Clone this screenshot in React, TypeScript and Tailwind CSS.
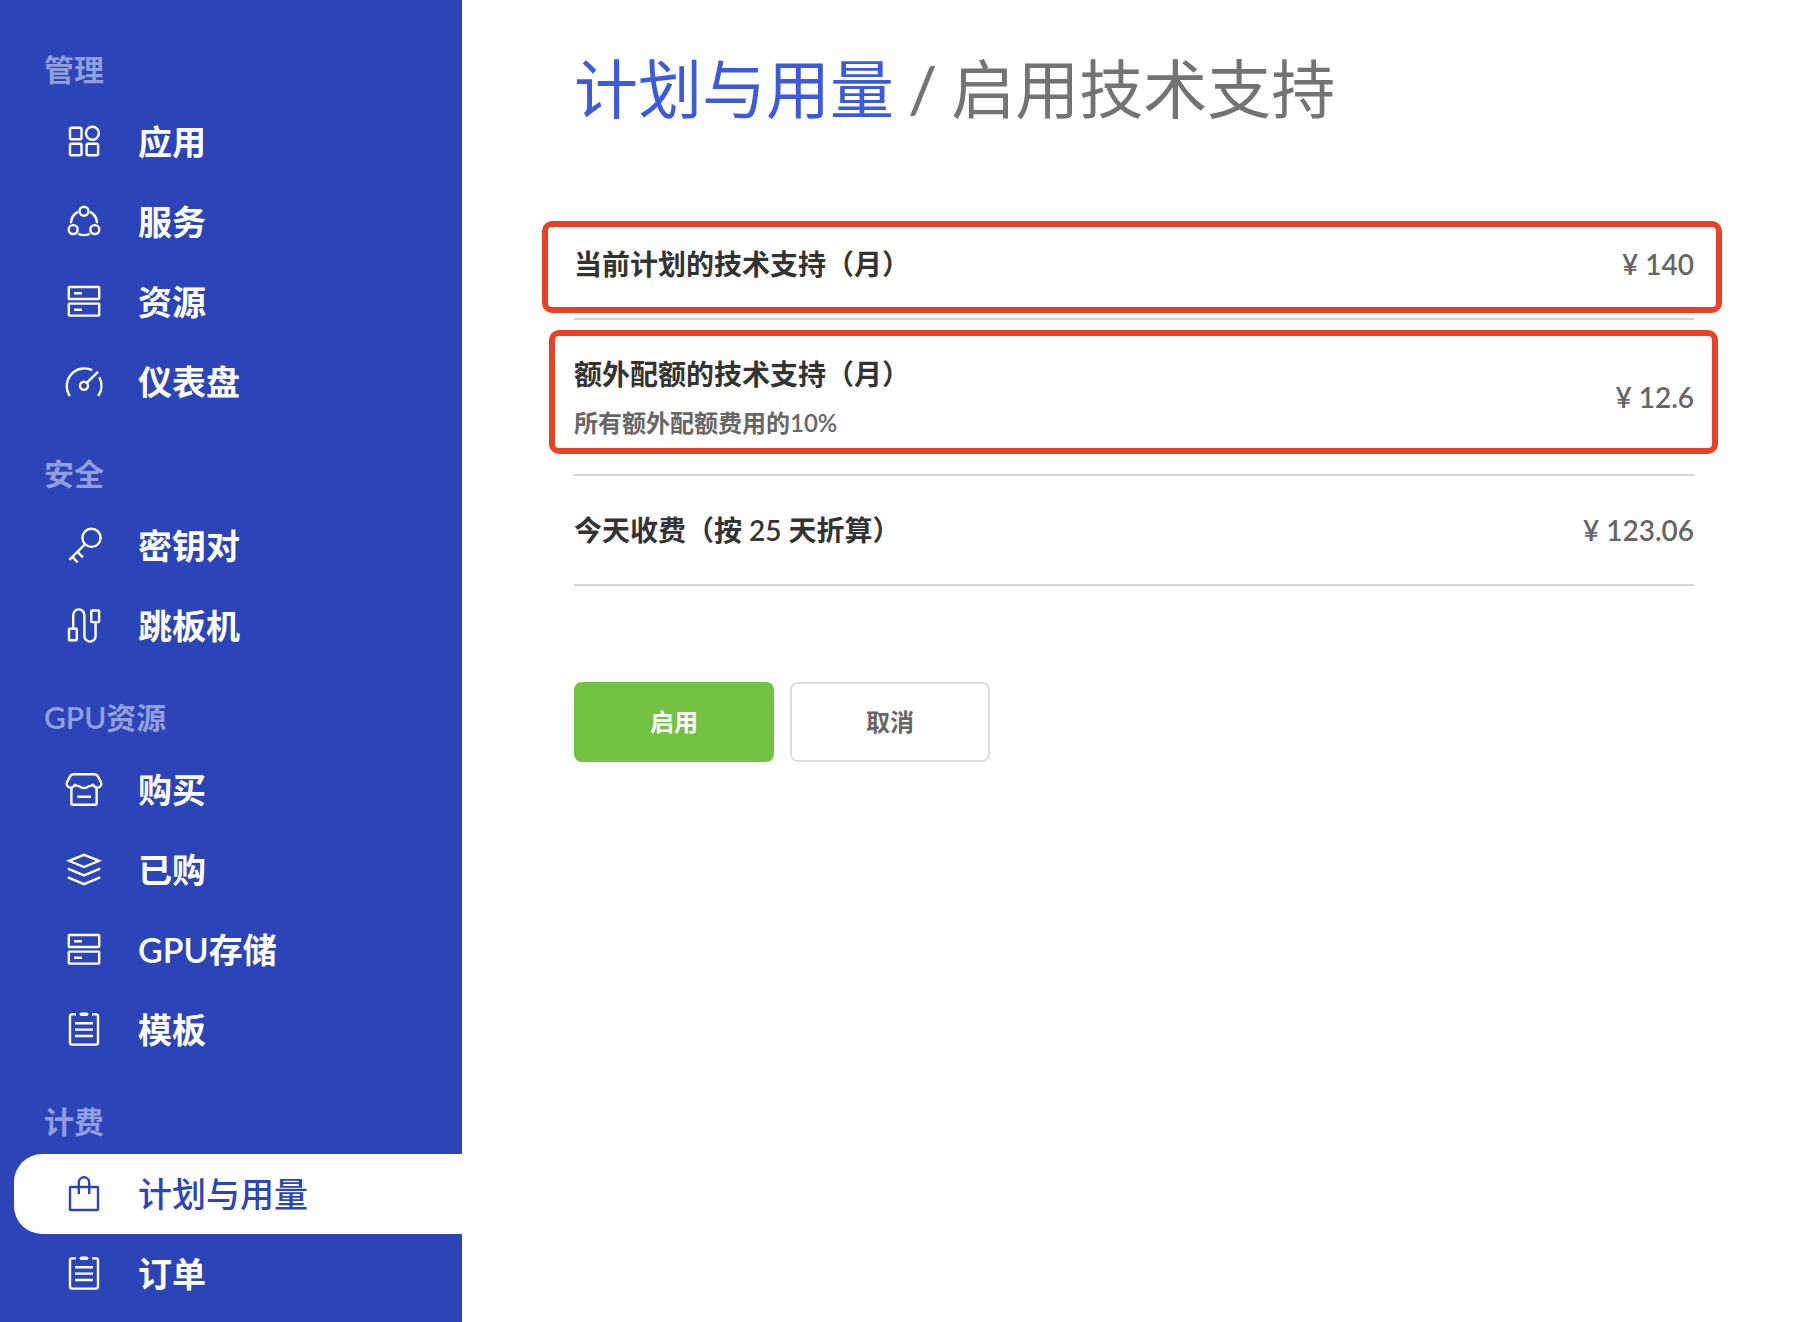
import type { ReactNode } from "react";

interface NavItem {
  label: string;
  icon: ReactNode;
  active?: boolean;
}

interface NavGroup {
  title: string;
  items: NavItem[];
}

interface Charge {
  label: string;
  note?: string;
  price: string;
  // position of the red highlight around the row
  highlight?: string;
}

const Icon = ({ children }: { children: ReactNode }) => (
  <svg
    viewBox="0 0 40 40"
    className="size-10 shrink-0"
    fill="none"
    stroke="currentColor"
    strokeWidth="2.4"
    aria-hidden="true"
  >
    {children}
  </svg>
);

const AppsIcon = () => (
  <Icon>
    <rect x="6" y="5.7" width="11.5" height="11.5" rx="1.5" />
    <circle cx="28.4" cy="11.3" r="6.5" />
    <rect x="6" y="21.7" width="11.5" height="11.5" rx="1.5" />
    <rect x="22.6" y="21.7" width="11.5" height="11.5" rx="1.5" />
  </Icon>
);

const ServicesIcon = () => (
  <Icon>
    <circle cx="20" cy="9.2" r="4.5" />
    <circle cx="9.2" cy="27.6" r="4.5" />
    <circle cx="30.8" cy="27.6" r="4.5" />
    <path d="M7 21.3A13.2 13.2 0 0 1 13.8 9.9M33 21.3A13.2 13.2 0 0 0 26.2 9.9M14.3 31.8A13.2 13.2 0 0 0 25.7 31.8" />
  </Icon>
);

const ServerIcon = () => (
  <Icon>
    <rect x="4.8" y="5" width="30.4" height="12" rx="0.5" />
    <rect x="4.8" y="21.6" width="30.4" height="12" rx="0.5" />
    <path d="M10 11.3h8M10 27.7h8" />
  </Icon>
);

const GaugeIcon = () => (
  <Icon>
    <circle cx="20" cy="23.7" r="4" />
    <path d="M23 20.6 34 9.8M5.8 34A17.7 17.7 0 0 1 28.2 8.2M35.3 15.3A17.7 17.7 0 0 1 34.2 34" />
  </Icon>
);

const KeyIcon = () => (
  <Icon>
    <circle cx="27.5" cy="11.8" r="9.1" />
    <path d="M20.9 18.3 5.3 33.9M13.3 25.7l5.6 5.6M8.2 30.8l5.5 5.5" />
  </Icon>
);

const CableIcon = () => (
  <Icon>
    <rect x="5" y="22.7" width="7.8" height="11.6" rx="0.5" />
    <rect x="27.3" y="4.5" width="7.8" height="11.6" rx="0.5" />
    <path d="M9.2 22.5V9a5.6 5.6 0 0 1 11.2 0v21a5.6 5.6 0 0 0 11.2 0V16.5" />
  </Icon>
);

const StoreIcon = () => (
  <Icon>
    <path
      strokeLinejoin="round"
      d="M9.5 4.3h21c1.7 0 2.7.7 3.4 2.1l3 5.6c1.4 2.9-.6 5.6-3.5 5.6-2 0-3.4-1.2-4.5-2.8-1.4 1.5-2.7 1.3-4 1.3-1.5 1.3-3 2-4.9 2s-3.4-.7-4.9-2c-1.3 0-2.6.2-4-1.3-1.1 1.6-2.5 2.8-4.5 2.8-2.9 0-4.9-2.7-3.5-5.6l3-5.6c.7-1.4 1.7-2.1 3.4-2.1Z"
    />
    <path d="M7.4 17.5v16.2q0 1 1 1h23.2q1 0 1-1V17.5M13.3 26.7H27" />
  </Icon>
);

const LayersIcon = () => (
  <Icon>
    <path d="M5 10.8 20 4.9l15 5.9-15 6.2Z" />
    <path d="M3.8 18.6 20 25.4l16.2-6.8M3.8 27.3 20 34.2l16.2-6.9" />
  </Icon>
);

const ClipboardIcon = () => (
  <Icon>
    <path d="M12 4.4H8q-2 0-2 2v26.2q0 2 2 2h24q2 0 2-2V6.4q0-2-2-2h-4" />
    <path d="M17.3 4.3h5.4" strokeWidth="3.4" strokeLinecap="round" />
    <path d="M11 13.3h18M11 19.6h18M11 26h18" />
  </Icon>
);

const BagIcon = () => (
  <Icon>
    <rect x="6" y="13" width="28" height="23" rx="0.5" />
    <path d="M14.8 20V8.5a5.2 5.2 0 0 1 10.4 0V20" />
  </Icon>
);

const groups: NavGroup[] = [
  {
    title: "管理",
    items: [
      { label: "应用", icon: <AppsIcon /> },
      { label: "服务", icon: <ServicesIcon /> },
      { label: "资源", icon: <ServerIcon /> },
      { label: "仪表盘", icon: <GaugeIcon /> },
    ],
  },
  {
    title: "安全",
    items: [
      { label: "密钥对", icon: <KeyIcon /> },
      { label: "跳板机", icon: <CableIcon /> },
    ],
  },
  {
    title: "GPU资源",
    items: [
      { label: "购买", icon: <StoreIcon /> },
      { label: "已购", icon: <LayersIcon /> },
      { label: "GPU存储", icon: <ServerIcon /> },
      { label: "模板", icon: <ClipboardIcon /> },
    ],
  },
  {
    title: "计费",
    items: [
      { label: "计划与用量", icon: <BagIcon />, active: true },
      { label: "订单", icon: <ClipboardIcon /> },
    ],
  },
];

const charges: Charge[] = [
  {
    label: "当前计划的技术支持（月）",
    price: "¥ 140",
    highlight: "top-[11px] bottom-[5px] -left-8 -right-7",
  },
  {
    label: "额外配额的技术支持（月）",
    note: "所有额外配额费用的10%",
    price: "¥ 12.6",
    highlight: "top-[10px] bottom-5 -left-[25px] -right-6",
  },
  { label: "今天收费（按 25 天折算）", price: "¥ 123.06" },
];

const Sidebar = () => (
  <nav className="w-[462px] shrink-0 bg-[#2b44b8] pt-[18px] pb-2">
    {groups.map((group) => (
      <section key={group.title}>
        <h2 className="h-[84px] pt-[30px] pl-11 text-[30px] leading-[42px] font-semibold text-[#929fde]">
          {group.title}
        </h2>
        <ul>
          {group.items.map((item) => (
            <li key={item.label}>
              <a
                href="#"
                aria-current={item.active ? "page" : undefined}
                className={
                  item.active
                    ? "ml-[14px] flex h-20 items-center gap-[34px] rounded-l-[28px] bg-white pl-[50px] text-[34px] leading-[48px] font-medium text-[#2b44b8]"
                    : "ml-[14px] flex h-20 items-center gap-[34px] pl-[50px] text-[34px] leading-[48px] font-semibold text-white"
                }
              >
                {item.icon}
                <span>{item.label}</span>
              </a>
            </li>
          ))}
        </ul>
      </section>
    ))}
  </nav>
);

const App = () => {
  return (
    <div className="flex min-h-screen bg-white font-['Lato','Noto_Sans_CJK_SC',sans-serif]">
      <Sidebar />
      <main className="min-w-0 flex-1 pt-11 pr-[106px] pl-28">
        <h1 className="text-[64px] leading-[90px] text-[#737373]">
          <a href="#" className="text-[#3b5bdb]">
            计划与用量
          </a>
          <span className="mx-[14px] font-medium">/</span>
          启用技术支持
        </h1>

        <dl className="mt-[76px]">
          {charges.map((charge) => (
            <div
              key={charge.label}
              className="relative flex items-center justify-between border-b-2 border-[#d4d4d8] py-8"
            >
              <dt className="text-[28px] leading-[44px] font-semibold text-[#333333]">
                {charge.label}
                {charge.note && (
                  <p className="mt-2 text-2xl leading-[38px] text-[#666666]">
                    {charge.note}
                  </p>
                )}
              </dt>
              <dd className="text-[28px] leading-[44px] font-semibold text-[#666666]">
                {charge.price}
              </dd>
              {charge.highlight && (
                <div
                  className={`pointer-events-none absolute rounded-[10px] border-6 border-[#e84128] ${charge.highlight}`}
                />
              )}
            </div>
          ))}
        </dl>

        <div className="mt-24 flex gap-4">
          <button
            type="button"
            className="h-20 w-[200px] rounded-lg bg-[#73c241] text-2xl font-semibold text-white"
          >
            启用
          </button>
          <button
            type="button"
            className="h-20 w-[200px] rounded-lg border-2 border-[#dddddd] bg-white text-2xl font-semibold text-[#666666]"
          >
            取消
          </button>
        </div>
      </main>
    </div>
  );
};
export default App;
